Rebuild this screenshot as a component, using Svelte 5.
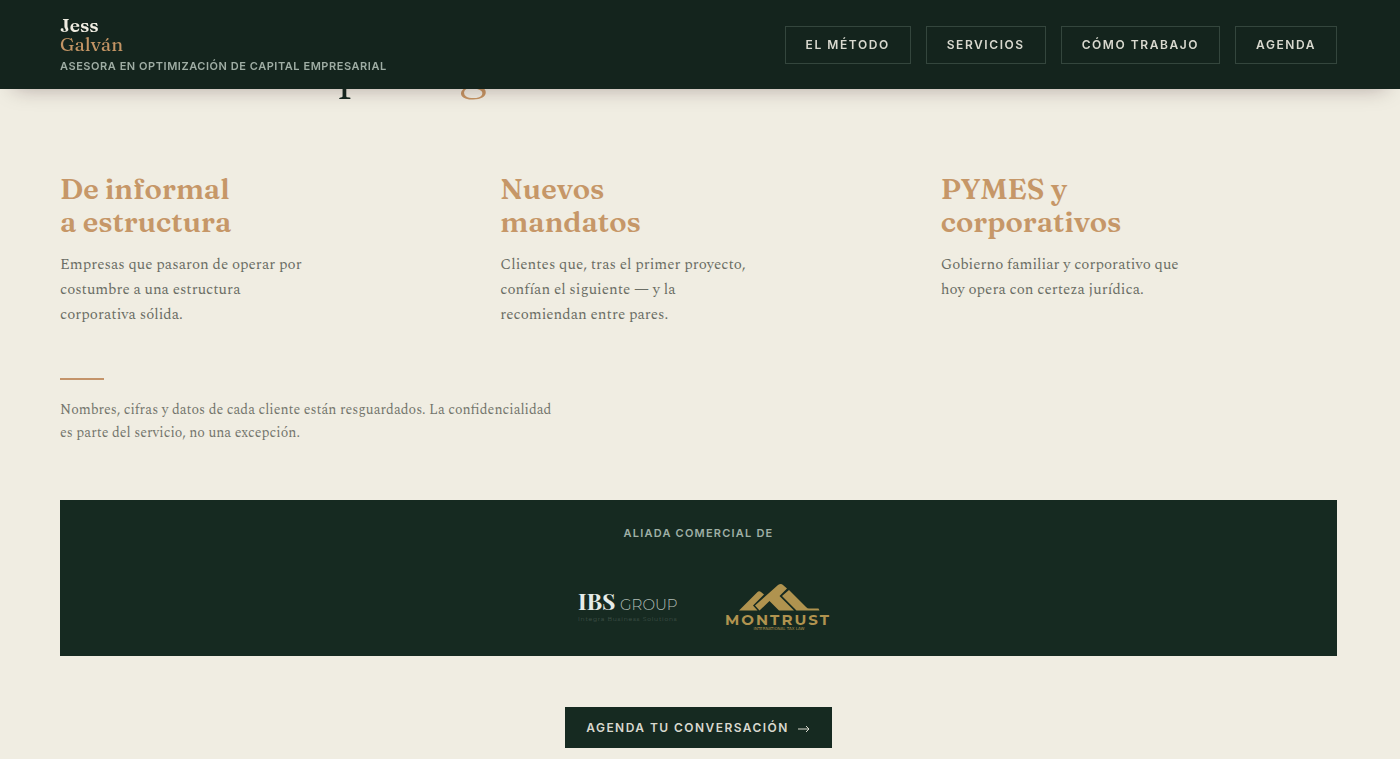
<script>
  const links = [
    { label: 'El método', href: '#metodo' },
    { label: 'Servicios', href: '#servicios' },
    { label: 'Cómo trabajo', href: '#como-trabajo' },
    { label: 'Agenda', href: '#agenda' }
  ];

  const results = [
    {
      title: ['De informal', 'a estructura'],
      text: 'Empresas que pasaron de operar por costumbre a una estructura corporativa sólida.'
    },
    {
      title: ['Nuevos', 'mandatos'],
      text: 'Clientes que, tras el primer proyecto, confían el siguiente — y la recomiendan entre pares.'
    },
    {
      title: ['PYMES y', 'corporativos'],
      text: 'Gobierno familiar y corporativo que hoy opera con certeza jurídica.'
    }
  ];
</script>

<header>
  <a class="brand" href="#inicio">
    <span class="first">Jess</span>
    <span class="last">Galván</span>
    <span class="tagline">Asesora en optimización de capital empresarial</span>
  </a>
  <nav>
    {#each links as link}
      <a href={link.href}>{link.label}</a>
    {/each}
  </nav>
</header>

<main>
  <h2>Resultados para <em>ganar</em></h2>

  <div class="results">
    {#each results as item}
      <article>
        <h3>{item.title[0]}<br />{item.title[1]}</h3>
        <p>{item.text}</p>
      </article>
    {/each}
  </div>

  <div class="note">
    <p>Nombres, cifras y datos de cada cliente están resguardados. La confidencialidad es parte del servicio, no una excepción.</p>
  </div>

  <section class="allies">
    <h4>Aliada comercial de</h4>
    <div class="logos">
      <svg class="ibs" viewBox="0 0 115 34" role="img" aria-label="IBS Group">
        <text class="ibs-name" x="13" y="18">IBS</text>
        <text class="ibs-group" x="55" y="18">GROUP</text>
        <text class="ibs-sub" x="13" y="29">Integra Business Solutions</text>
      </svg>
      <svg class="montrust" viewBox="0 0 108 50" role="img" aria-label="Montrust">
        <path d="M14 26.500 L32 8.500 Q34 6.500 36 8 L39 10.500 L28 21.500 L32.500 26.500 Z" />
        <path d="M30 21.500 L53 1 Q56 -1 58 1 L62 4.500 L54.500 12 L69 26.500 L54 26.500 L44.500 17 L34.500 26.500 Z" />
        <path d="M57 12 L64 6 L81 23 Q82.500 24.500 84 24.500 L93.500 24.500 L94.500 26.500 L71.500 26.500 Z" />
        <text class="mt-name" x="0" y="41">MONTRUST</text>
        <text class="mt-sub" x="54" y="46">INTERNATIONAL TAX LAW</text>
      </svg>
    </div>
  </section>

  <a class="cta" href="#agenda">
    Agenda tu conversación
    <svg viewBox="0 0 14 10" aria-hidden="true"><path d="M1 6H12M9 3L12 6L9 9" /></svg>
  </a>
</main>

<style>
  :global(body) {
    background: #f0ede2;
  }

  header {
    position: fixed;
    top: 0;
    left: 0;
    right: 0;
    z-index: 10;
    display: flex;
    align-items: center;
    justify-content: space-between;
    padding: 16px 63px 15px 60px;
    background: #14241d;
    box-shadow: 0 12px 22px -14px rgba(40, 10, 20, 0.35);
  }

  a {
    text-decoration: none;
  }

  .brand {
    display: flex;
    flex-direction: column;
    font: 600 19px/19px Fraunces, "Liberation Serif", serif;
  }

  .first {
    color: #f0ede2;
  }

  .last {
    font-weight: 500;
    color: #c39464;
  }

  .tagline {
    margin-top: 4px;
    font: 600 11px/16px Inter, sans-serif;
    letter-spacing: 0.05em;
    text-transform: uppercase;
    color: #9fada4;
  }

  nav {
    display: flex;
    gap: 15px;
  }

  nav a {
    padding: 0 20px;
    border: 1px solid #34463d;
    font: 600 12px/36px Inter, sans-serif;
    letter-spacing: 0.13em;
    text-transform: uppercase;
    color: #d9d9cf;
  }

  main {
    display: flex;
    flex-direction: column;
    padding: 38px 63px 10px 60px;
  }

  h2, h3, h4, p {
    margin: 0;
  }

  h2 {
    font: 300 53px/60px Fraunces, "Liberation Serif", serif;
    color: #162a21;
  }

  h2 em {
    font-style: normal;
    color: #c69563;
  }

  .results {
    display: grid;
    grid-template-columns: repeat(3, 1fr);
    gap: 44px;
    margin-top: 74px;
  }

  h3 {
    font: 600 29px/33px Fraunces, "Liberation Serif", serif;
    color: #c69768;
  }

  .results p {
    max-width: 256px;
    margin-top: 14px;
    font: 400 15px/25px Spectral, "Liberation Serif", serif;
    color: #6b6e65;
  }

  .note {
    max-width: 500px;
    margin-top: 51px;
  }

  .note::before {
    content: "";
    display: block;
    width: 44px;
    height: 2px;
    margin-bottom: 18px;
    background: #c4946a;
  }

  .note p {
    font: 400 14px/23px Spectral, "Liberation Serif", serif;
    color: #74766d;
  }

  .allies {
    display: flex;
    flex-direction: column;
    align-items: center;
    margin-top: 56px;
    padding: 25px 20px 22px;
    background: #162a21;
  }

  h4 {
    font: 600 11px/16px Inter, sans-serif;
    letter-spacing: 0.11em;
    text-transform: uppercase;
    color: #9fb0a6;
  }

  .logos {
    display: flex;
    align-items: center;
    gap: 45px;
    margin-top: 43px;
  }

  .ibs {
    width: 115px;
    height: 34px;
    overflow: visible;
  }

  .ibs-name {
    font: 700 23px "Playfair Display", "Liberation Serif", serif;
    fill: #e6ece8;
  }

  .ibs-group {
    font: 300 15px Montserrat, Inter, sans-serif;
    fill: #b3beb8;
  }

  .ibs-sub {
    font: 400 6px Montserrat, Inter, sans-serif;
    letter-spacing: 0.13em;
    fill: #42544b;
  }

  .montrust {
    width: 108px;
    height: 50px;
    overflow: visible;
    fill: #b0934f;
  }

  .mt-name {
    font: 700 15px Montserrat, "DejaVu Sans", sans-serif;
    letter-spacing: 2px;
  }

  .mt-sub {
    font: 400 4px "DejaVu Sans", sans-serif;
    text-anchor: middle;
  }

  .cta {
    display: flex;
    align-items: center;
    align-self: center;
    gap: 8px;
    margin-top: 51px;
    padding: 0 21px;
    background: #162a21;
    font: 600 12px/41px Inter, sans-serif;
    letter-spacing: 0.12em;
    text-transform: uppercase;
    color: #d9d9cf;
  }

  .cta svg {
    width: 14px;
    height: 10px;
    fill: none;
    stroke: #d9d9cf;
  }
</style>
